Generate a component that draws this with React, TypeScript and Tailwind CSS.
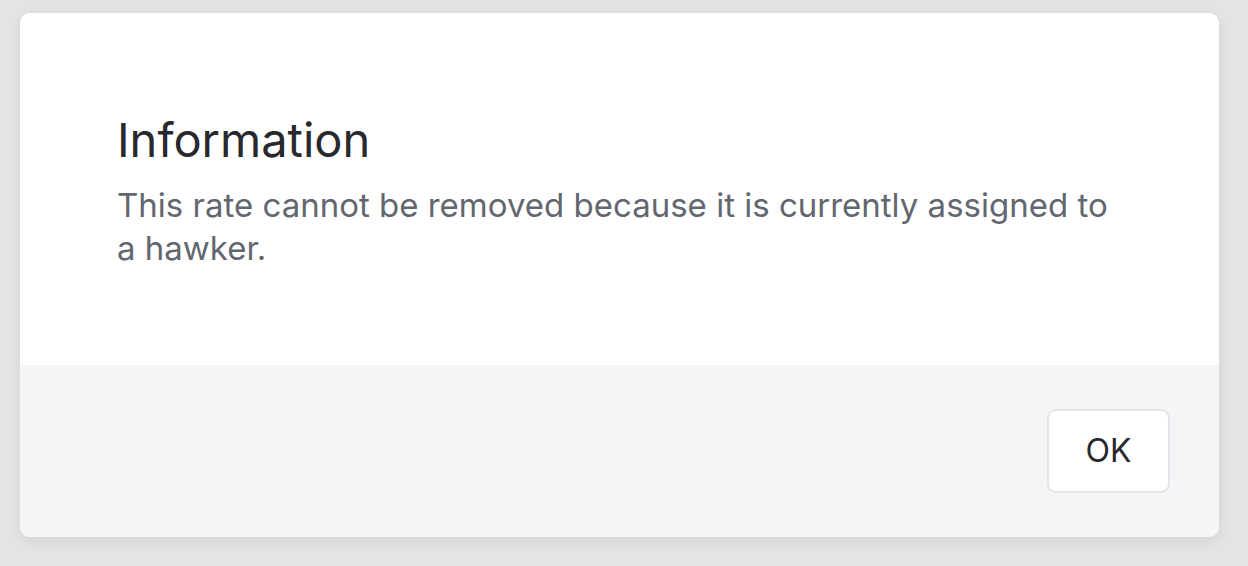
import React from "react";

const App: React.FC = () => {
  return (
    <div
      className="min-h-[566px] w-full bg-[#e4e4e4] pt-[13px] pr-[29px] pb-[29px] pl-[20px]"
      style={{ fontFamily: "Inter, 'Noto Sans', sans-serif" }}
    >
      <div className="overflow-hidden rounded-[10px] bg-white shadow-[0_4px_14px_rgba(0,0,0,0.08)]">
        <div className="h-[352px] pl-[97px] pr-[80px] pt-[99px]">
          <h2 className="text-[47px] leading-[56px] font-normal text-[#27292d]">
            Information
          </h2>
          <p className="mt-[16px] max-w-[1000px] text-[33px] leading-[43px] text-[#62676f]">
            This rate cannot be removed because it is currently assigned to a hawker.
          </p>
        </div>
        <div className="flex h-[172px] items-center justify-end bg-[#f4f5f7] pr-[49px]">
          <button className="h-[84px] w-[123px] rounded-[9px] border-2 border-[#e3e5e8] bg-white text-[32px] text-[#27292d]">
            OK
          </button>
        </div>
      </div>
    </div>
  );
};

export default App;
